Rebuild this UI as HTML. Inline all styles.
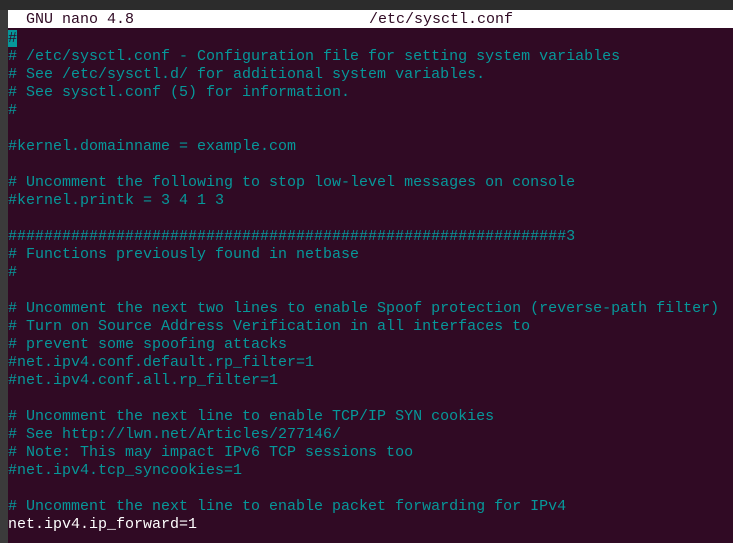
<!DOCTYPE html>
<html><head><meta charset="utf-8"><style>
html,body{margin:0;padding:0;}
body{width:733px;height:543px;overflow:hidden;background:#300a24;position:relative;font-family:"Liberation Mono",monospace;font-size:15px;}
#top{position:absolute;left:0;top:0;width:733px;height:10px;background:#2c2c2c;}
#left{position:absolute;left:0;top:10px;width:8px;height:533px;background:#3b3b3b;}
#bar{position:absolute;left:8px;top:10px;width:725px;height:18px;background:#fff;color:#300a24;}
#bar span{position:absolute;top:1px;line-height:18px;white-space:pre;}
#txt{position:absolute;left:8px;top:30px;margin:0;font:inherit;line-height:18px;color:#06989a;white-space:pre;}
.w{color:#fff;}
.cur{background:#06989a;color:#300a24;}
</style></head><body>
<div id="top"></div><div id="left"></div>
<div id="bar"><span style="left:18px">GNU nano 4.8</span><span style="left:361px">/etc/sysctl.conf</span></div>
<pre id="txt"><span class="cur">#</span>
# /etc/sysctl.conf - Configuration file for setting system variables
# See /etc/sysctl.d/ for additional system variables.
# See sysctl.conf (5) for information.
#

#kernel.domainname = example.com

# Uncomment the following to stop low-level messages on console
#kernel.printk = 3 4 1 3

##############################################################3
# Functions previously found in netbase
#

# Uncomment the next two lines to enable Spoof protection (reverse-path filter)
# Turn on Source Address Verification in all interfaces to
# prevent some spoofing attacks
#net.ipv4.conf.default.rp_filter=1
#net.ipv4.conf.all.rp_filter=1

# Uncomment the next line to enable TCP/IP SYN cookies
# See http://lwn.net/Articles/277146/
# Note: This may impact IPv6 TCP sessions too
#net.ipv4.tcp_syncookies=1

# Uncomment the next line to enable packet forwarding for IPv4
<span class="w">net.ipv4.ip_forward=1</span></pre>
</body></html>
